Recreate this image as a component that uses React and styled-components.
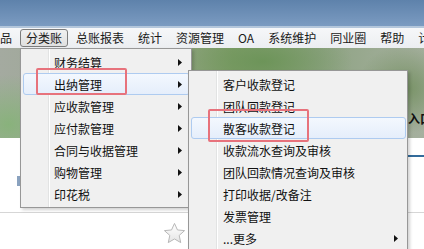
import React from 'react';
import styled, { createGlobalStyle } from 'styled-components';

const GlobalStyle = createGlobalStyle`
  html, body { margin: 0; padding: 0; }
  body {
    width: 424px;
    height: 249px;
    overflow: hidden;
    background: #fff;
    font-family: "Noto Sans CJK SC", "Microsoft YaHei", sans-serif;
    font-size: 12px;
    color: #111;
  }
`;

const Page = styled.div`
  position: relative;
  width: 424px;
  height: 249px;
  overflow: hidden;
  display: flex;
  flex-direction: column;
`;

const TitleBand = styled.div`
  flex: none;
  height: 26px;
  background: linear-gradient(#5e82ab, #7b9bc1);
  border-bottom: 2px solid #b3c6db;
`;

const MenuBar = styled.nav`
  flex: none;
  height: 20px;
  display: flex;
  align-items: center;
  gap: 2px;
  margin-left: -6px;
  background: linear-gradient(#f6f7f9, #eceef1);
`;

const BarItem = styled.div`
  box-sizing: border-box;
  height: 18px;
  padding: 0 5px;
  display: flex;
  align-items: center;
  white-space: nowrap;
  line-height: 16px;
  color: #1a1a1a;
  border: 1px solid ${p => (p.$open ? '#7d7d7d' : 'transparent')};
  border-radius: 3px;
  background: ${p => (p.$open ? 'linear-gradient(#f1f1f1, #e0e0e0)' : 'transparent')};
`;

const Banner = styled.div`
  flex: none;
  height: 90px;
  box-sizing: border-box;
  display: flex;
  align-items: flex-end;
  padding: 0 0 12px 408px;
  white-space: nowrap;
  background:
    radial-gradient(ellipse 90px 40px at 62% 15%, rgba(104, 146, 84, 0.85), transparent),
    radial-gradient(ellipse 60px 50px at 2% 85%, rgba(130, 180, 115, 0.8), transparent),
    radial-gradient(ellipse 50px 45px at 96% 45%, rgba(110, 140, 90, 0.8), transparent),
    linear-gradient(90deg, #a4aaa0 0%, #97a68c 35%, #84a06e 55%, #8ea383 75%, #a6b09f 100%);
`;

const BannerLabel = styled.span`
  font-weight: bold;
  font-size: 12px;
  line-height: 14px;
  color: #111;
`;

const Content = styled.div`
  flex: 1;
  display: flex;
  flex-direction: column;
  background: #fff;
`;

const TabStrip = styled.div`
  height: 17px;
  margin-left: 300px;
  border-bottom: 2px solid #336b9b;
`;

const ContentBody = styled.div`
  height: 56px;
  display: flex;
  align-items: flex-start;
  padding: 19px 0 0 17px;
  box-sizing: border-box;
  border-bottom: 1px solid #d6d6d6;
`;

const ScrollMark = styled.span`
  width: 3px;
  height: 10px;
  background: #8aa2bf;
`;

const Footer = styled.div`
  flex: 1;
  display: flex;
  align-items: flex-start;
  padding: 9px 0 0 163px;
`;

const Menu = styled.div`
  position: absolute;
  left: ${p => p.$x}px;
  top: ${p => p.$y}px;
  width: ${p => p.$w}px;
  box-sizing: border-box;
  padding: 2px 0;
  background: #f0f0f0;
  border: 1px solid #979797;
  box-shadow: 2px 2px 3px rgba(0, 0, 0, 0.18);
  z-index: ${p => p.$z};

  &::before {
    content: '';
    position: absolute;
    left: 27px;
    top: 0;
    bottom: 0;
    width: 1px;
    background: #e2e3e3;
    box-shadow: 1px 0 0 #fff;
  }
`;

const MenuRow = styled.div`
  position: relative;
  z-index: 1;
  box-sizing: border-box;
  height: 22px;
  margin: 0 1px 0 2px;
  padding: 0 7px 0 ${p => p.$indent}px;
  display: flex;
  align-items: center;
  justify-content: space-between;
  white-space: nowrap;
  color: #111;
  border: 1px solid ${p => (p.$hot ? '#aecbf0' : 'transparent')};
  border-radius: 3px;
  background: ${p => (p.$hot ? 'linear-gradient(#f3f8fe, #e5eefb)' : 'transparent')};
`;

const Mark = styled.div`
  position: absolute;
  left: ${p => p.$x}px;
  top: ${p => p.$y}px;
  width: ${p => p.$w}px;
  height: ${p => p.$h}px;
  box-sizing: border-box;
  border: 2px solid #e7727c;
  border-radius: 2px;
  z-index: 5;
  pointer-events: none;
`;

const Arrow = () => (
  <svg width="4" height="7" viewBox="0 0 4 7">
    <polygon points="0,0 4,3.5 0,7" fill="#111" />
  </svg>
);

const Star = () => (
  <svg width="23" height="23" viewBox="0 0 24 24">
    <defs>
      <linearGradient id="starFill" x1="0" y1="0" x2="0" y2="1">
        <stop offset="0" stopColor="#ffffff" />
        <stop offset="1" stopColor="#e4e4e4" />
      </linearGradient>
    </defs>
    <polygon
      points="12,1.5 15.1,8.3 22.5,9 16.9,14 18.5,21.5 12,17.7 5.5,21.5 7.1,14 1.5,9 8.9,8.3"
      fill="url(#starFill)"
      stroke="#b5b5b5"
      strokeWidth="1"
      strokeLinejoin="round"
    />
  </svg>
);

const barItems = ['品', '分类账', '总账报表', '统计', '资源管理', 'OA', '系统维护', '同业圈', '帮助', '计'];

const mainItems = ['财务结算', '出纳管理', '应收款管理', '应付款管理', '合同与收据管理', '购物管理', '印花税'];

const subItems = [
  { label: '客户收款登记' },
  { label: '团队回款登记' },
  { label: '散客收款登记', hot: true },
  { label: '收款流水查询及审核' },
  { label: '团队回款情况查询及审核' },
  { label: '打印收据/改备注' },
  { label: '发票管理' },
  { label: '...更多', more: true },
];

export default function App() {
  return (
    <Page>
      <GlobalStyle />
      <TitleBand />
      <MenuBar>
        {barItems.map(t => (
          <BarItem key={t} $open={t === '分类账'}>{t}</BarItem>
        ))}
      </MenuBar>
      <Banner>
        <BannerLabel>入口</BannerLabel>
      </Banner>
      <Content>
        <TabStrip />
        <ContentBody>
          <ScrollMark />
        </ContentBody>
        <Footer>
          <Star />
        </Footer>
      </Content>

      <Menu $x={20} $y={48} $w={172} $z={2}>
        {mainItems.map(t => (
          <MenuRow key={t} $indent={30} $hot={t === '出纳管理'}>
            <span>{t}</span>
            <Arrow />
          </MenuRow>
        ))}
      </Menu>

      <Menu $x={188} $y={70} $w={220} $z={3}>
        {subItems.map(it => (
          <MenuRow key={it.label} $indent={31} $hot={it.hot}>
            <span>{it.label}</span>
            {it.more && <Arrow />}
          </MenuRow>
        ))}
      </Menu>

      <Mark $x={36} $y={68} $w={91} $h={27} />
      <Mark $x={208} $y={109} $w={101} $h={33} />
    </Page>
  );
}
